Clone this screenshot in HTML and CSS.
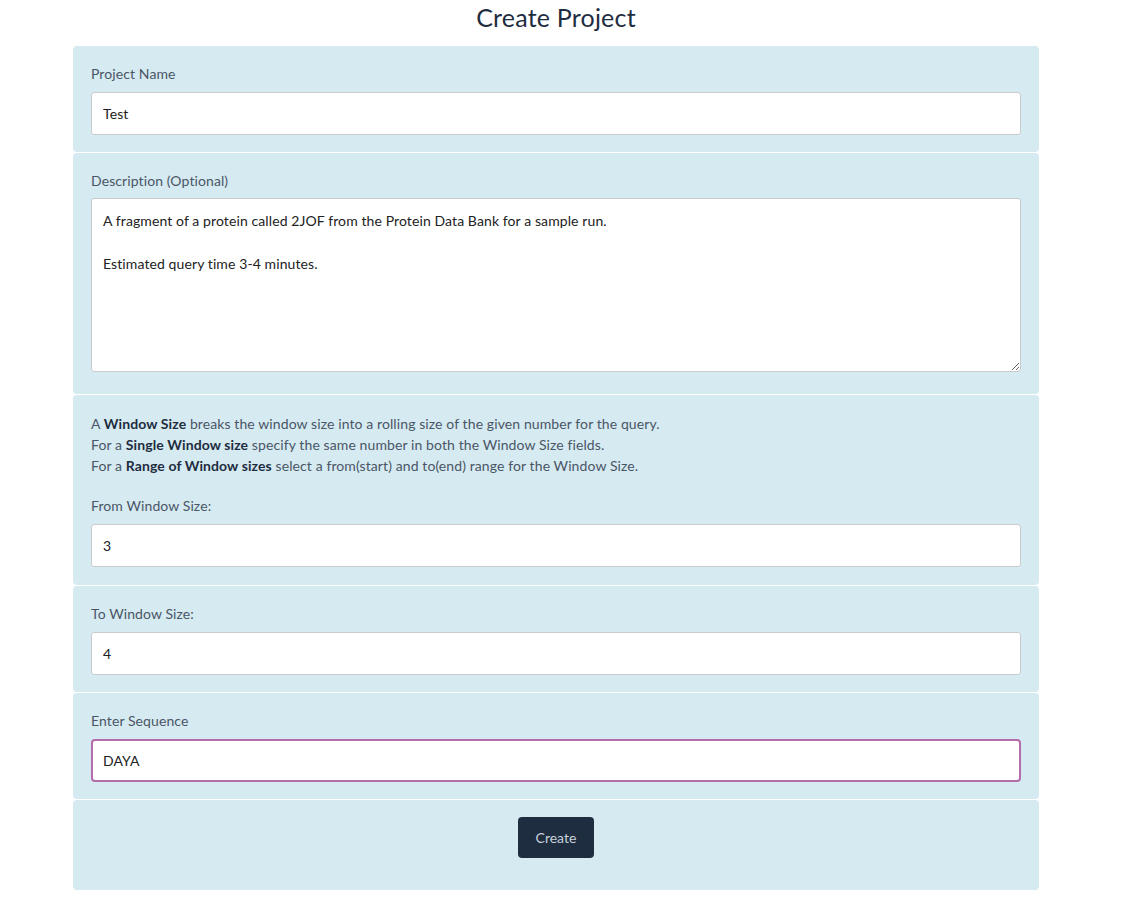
FILE: index.html
```html
<!DOCTYPE html>
<html>
<head>
<meta charset="utf-8">
<link rel="stylesheet" href="styles.css">
</head>
<body>
<div class="page">
  <h1 class="title">Create Project</h1>
  <form class="form">
    <div class="panel">
      <label class="label">Project Name</label>
      <input class="field" type="text" value="Test">
    </div>
    <div class="panel">
      <label class="label">Description (Optional)</label>
      <textarea class="field area">A fragment of a protein called 2JOF from the Protein Data Bank for a sample run.

Estimated query time 3-4 minutes.</textarea>
    </div>
    <div class="panel tall">
      <p class="help">A <b>Window Size</b> breaks the window size into a rolling size of the given number for the query.<br>For a <b>Single Window size</b> specify the same number in both the Window Size fields.<br>For a <b>Range of Window sizes</b> select a from(start) and to(end) range for the Window Size.</p>
      <label class="label">From Window Size:</label>
      <input class="field" type="text" value="3">
    </div>
    <div class="panel">
      <label class="label">To Window Size:</label>
      <input class="field" type="text" value="4">
    </div>
    <div class="panel">
      <label class="label">Enter Sequence</label>
      <input class="field focus" type="text" value="DAYA">
    </div>
    <div class="panel actions">
      <button class="btn" type="button">Create</button>
    </div>
  </form>
</div>
</body>
</html>
```

FILE: styles.css
```css
html, body {
  margin: 0;
  padding: 0;
  background: #ffffff;
}
body {
  font-family: Lato, "Open Sans", sans-serif;
  font-variant-ligatures: none;
  letter-spacing: 0.1px;
  color: #4a5666;
}
.page {
  width: 966px;
  margin-left: 73px;
}
.title {
  margin: 0;
  padding-top: 2px;
  height: 44px;
  line-height: 30px;
  font-size: 25px;
  font-weight: 400;
  letter-spacing: 0.2px;
  color: #1e2d3f;
  text-align: center;
}
.form {
  display: flex;
  flex-direction: column;
  gap: 1px;
}
.panel {
  background: #d6eaf2;
  border-radius: 4px;
  padding: 19px 18px 17px;
  display: flex;
  flex-direction: column;
}
.panel.tall {
  padding-bottom: 18px;
}
.label {
  font-size: 14px;
  line-height: 18px;
  margin-bottom: 9px;
  color: #4a5666;
}
.field {
  box-sizing: border-box;
  width: 930px;
  height: 43px;
  margin: 0;
  border: 1px solid #c9cccf;
  border-radius: 3px;
  background: #ffffff;
  padding: 0 11px;
  font-family: Lato, "Open Sans", sans-serif;
  font-variant-ligatures: none;
  letter-spacing: 0.1px;
  font-size: 14px;
  color: #222222;
  outline: none;
}
.area {
  height: 174px;
  margin-top: -1px;
  padding: 11px 11px;
  line-height: 21.5px;
  resize: vertical;
  margin-bottom: 5px;
}
.focus {
  border: 2px solid #b46cab;
  border-radius: 4px;
  padding: 0 10px;
}
.help {
  margin: -1px 0 21px;
  font-size: 14px;
  line-height: 21px;
  color: #4a5666;
}
.help b {
  color: #1e2d3f;
  font-weight: 700;
}
.actions {
  align-items: center;
  padding: 17px 18px 32px;
}
.btn {
  width: 76px;
  height: 41px;
  border: none;
  border-radius: 4px;
  background: #1e2d40;
  color: #c9d2db;
  font-family: Lato, "Open Sans", sans-serif;
  font-size: 14px;
  cursor: pointer;
}
```
